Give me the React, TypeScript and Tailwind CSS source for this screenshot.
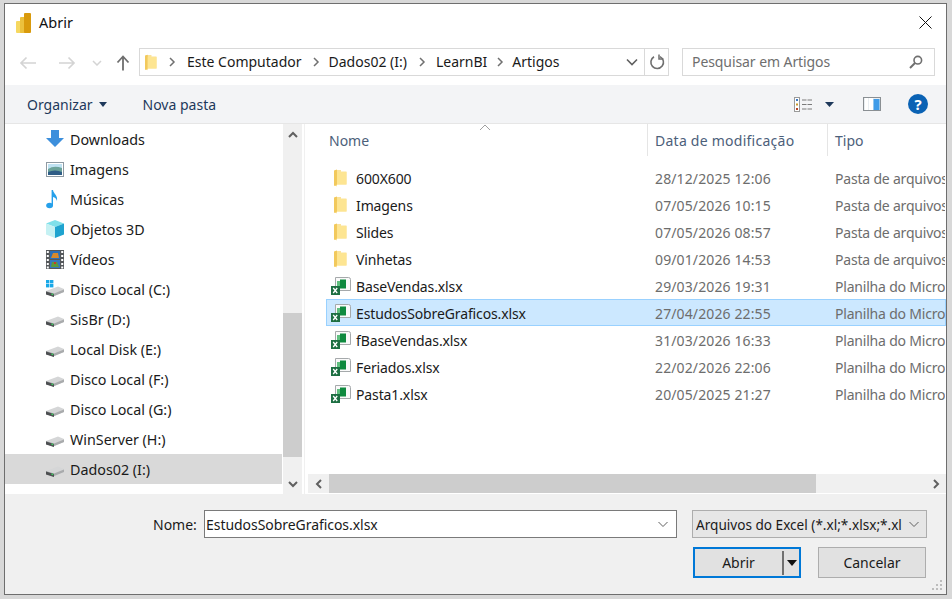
import React from "react";

const font = "font-['Noto_Sans','Open_Sans',sans-serif]";

function Logo() {
  return (
    <svg width="16" height="20" viewBox="0 0 16 20" className="shrink-0">
      <rect x="0" y="8" width="7" height="12" rx="1" fill="#f6d860" />
      <rect x="4" y="4" width="7" height="16" rx="1" fill="#ecc13d" />
      <rect x="8" y="0" width="7" height="20" rx="1" fill="#d99a0c" />
    </svg>
  );
}

function Folder({ w = 13, h = 18 }: { w?: number; h?: number }) {
  return (
    <svg width={w} height={h} viewBox="0 0 13 18" className="shrink-0">
      <path d="M1 1 L7 1 L7 2.5 L12.5 2.5 L12.5 15.5 L3 15.5 L3 17.5 L1 16.5 Z" fill="#fbe39a" />
      <path d="M0 1.5 L3 0.5 L3 15.5 L1 17 L0 16.5 Z" fill="#f2c95c" />
      <path d="M3 3 L12.5 3 L12.5 15.5 L3 15.5 Z" fill="#fde592" />
    </svg>
  );
}

function Excel() {
  return (
    <svg width="20" height="18" viewBox="0 0 20 18" className="shrink-0">
      <path d="M4.5 .5 H17.5 Q19.5 .5 19.5 2.5 V13.5 H4.5 Z" fill="#fafafa" stroke="#a5a9ab" />
      <rect x="6" y="4" width="3" height="7" fill="#5fc07f" />
      <rect x="9" y="2.5" width="6" height="9" fill="#0f8a3f" />
      <rect x="0" y="9" width="9" height="9" fill="#1d6f42" />
      <path d="M2.2 11 L6.2 16 M6.2 11 L2.2 16" stroke="#fff" strokeWidth="1.3" />
    </svg>
  );
}

function Drive({ win }: { win?: boolean }) {
  return (
    <svg width="18" height="18" viewBox="0 0 18 18" className="shrink-0">
      {win && (
        <g fill="#18a8e8">
          <rect x="0" y="0" width="3.4" height="3.4" />
          <rect x="4" y="0" width="3.4" height="3.4" />
          <rect x="0" y="4" width="3.4" height="3.4" />
          <rect x="4" y="4" width="3.4" height="3.4" />
        </g>
      )}
      <path d="M0 11 L12 6.5 L18 9 L18 12 L7 16.5 L0 14 Z" fill="#d5d6d7" />
      <path d="M0 11 L8 13.5 L18 9.5 L18 12 L7 16.5 L0 14 Z" fill="#a9abad" />
      <path d="M0 11.5 L8 14 L8 17 L0 14.5 Z" fill="#4d4f51" />
      <rect x="5.5" y="13.6" width="1.8" height="1.5" fill="#3fcf63" />
    </svg>
  );
}

function SideIcon({ kind }: { kind: string }) {
  if (kind === "down")
    return (
      <svg width="18" height="18" viewBox="0 0 18 18" className="shrink-0">
        <path d="M5 0 H13 V8 H18 L9 17 L0 8 H5 Z" fill="#3d8fdc" />
      </svg>
    );
  if (kind === "img")
    return (
      <svg width="18" height="15" viewBox="0 0 18 15" className="shrink-0">
        <rect x=".5" y=".5" width="17" height="14" fill="#fff" stroke="#8e9aa3" />
        <rect x="2" y="2" width="14" height="5" fill="#bfe2f2" />
        <path d="M2 7 Q8 3 16 6 V13 H2 Z" fill="#6ba39a" />
        <path d="M2 10 Q9 7 16 10 V13 H2 Z" fill="#2f5d86" />
      </svg>
    );
  if (kind === "music")
    return (
      <svg width="12" height="19" viewBox="0 0 12 19" className="shrink-0">
        <ellipse cx="3.6" cy="15.5" rx="3.4" ry="2.8" fill="#26a0ea" />
        <path d="M5.6 0 H7 C7.6 4 12 5 11 11 C10.4 8.5 9 7.5 7 7 V15.5 H5.6 Z" fill="#26a0ea" />
      </svg>
    );
  if (kind === "cube")
    return (
      <svg width="18" height="18" viewBox="0 0 18 18" className="shrink-0">
        <path d="M9 0 L18 3.5 L9 7 L0 3.5 Z" fill="#7fe0ea" />
        <path d="M0 3.5 L9 7 V18 L0 14.5 Z" fill="#c5f1f3" />
        <path d="M18 3.5 L9 7 V18 L18 14.5 Z" fill="#1fa3cf" />
      </svg>
    );
  if (kind === "film")
    return (
      <svg width="18" height="19" viewBox="0 0 18 19" className="shrink-0">
        <rect width="18" height="19" fill="#55585b" />
        <rect x="0.8" y="1" width="2" height="2" fill="#fff" />
        <rect x="0.8" y="5" width="2" height="2" fill="#fff" />
        <rect x="0.8" y="9" width="2" height="2" fill="#fff" />
        <rect x="0.8" y="13" width="2" height="2" fill="#fff" />
        <rect x="0.8" y="16.5" width="2" height="2" fill="#fff" />
        <rect x="15.2" y="1" width="2" height="2" fill="#fff" />
        <rect x="15.2" y="5" width="2" height="2" fill="#fff" />
        <rect x="15.2" y="9" width="2" height="2" fill="#fff" />
        <rect x="15.2" y="13" width="2" height="2" fill="#fff" />
        <rect x="15.2" y="16.5" width="2" height="2" fill="#fff" />
        <rect x="4" y="1" width="10" height="8" fill="#2a6fb8" />
        <rect x="4" y="10" width="10" height="8" fill="#3579bd" />
        <path d="M7 3 L12 3 L13 8 L5 8 Z" fill="#d8892a" />
        <path d="M6 12 L11 12 L13 17 L5 17 Z" fill="#5d9a3a" />
        <rect x="8" y="12" width="2" height="2" fill="#c83a2a" />
      </svg>
    );
  if (kind === "win") return <Drive win />;
  return <Drive />;
}

const nav: [string, string][] = [
  ["down", "Downloads"],
  ["img", "Imagens"],
  ["music", "Músicas"],
  ["cube", "Objetos 3D"],
  ["film", "Vídeos"],
  ["win", "Disco Local (C:)"],
  ["drive", "SisBr (D:)"],
  ["drive", "Local Disk (E:)"],
  ["drive", "Disco Local (F:)"],
  ["drive", "Disco Local (G:)"],
  ["drive", "WinServer (H:)"],
  ["drive", "Dados02 (I:)"],
];

const files: [string, string, string, string][] = [
  ["f", "600X600", "28/12/2025 12:06", "Pasta de arquivos"],
  ["f", "Imagens", "07/05/2026 10:15", "Pasta de arquivos"],
  ["f", "Slides", "07/05/2026 08:57", "Pasta de arquivos"],
  ["f", "Vinhetas", "09/01/2026 14:53", "Pasta de arquivos"],
  ["x", "BaseVendas.xlsx", "29/03/2026 19:31", "Planilha do Microsoft Excel"],
  ["x", "EstudosSobreGraficos.xlsx", "27/04/2026 22:55", "Planilha do Microsoft Excel"],
  ["x", "fBaseVendas.xlsx", "31/03/2026 16:33", "Planilha do Microsoft Excel"],
  ["x", "Feriados.xlsx", "22/02/2026 22:06", "Planilha do Microsoft Excel"],
  ["x", "Pasta1.xlsx", "20/05/2025 21:27", "Planilha do Microsoft Excel"],
];

function Chev({ d, c = "#606060", w = 2, s = 12 }: { d: string; c?: string; w?: number; s?: number }) {
  return (
    <svg width={s} height={s} viewBox="0 0 12 12" className="shrink-0">
      <path d={d} fill="none" stroke={c} strokeWidth={w} />
    </svg>
  );
}

export default function App() {
  return (
    <div className={`${font} w-[952px] h-[599px] bg-[#d8d8d8] pt-[3px] pl-[4px] overflow-hidden text-[14px] leading-[20px] text-[#1a1a1a]`}>
      <div className="w-[943px] h-[592px] border border-[#6e6e6e] bg-white flex flex-col overflow-hidden">
        {/* title */}
        <div className="h-[37px] shrink-0 flex items-center pl-[11px] pr-[14px]">
          <Logo />
          <span className="ml-[7px] pb-[2px] text-[14.5px] text-[#111]">Abrir</span>
          <svg width="13" height="13" viewBox="0 0 13 13" className="ml-auto">
            <path d="M.5 .5 L12.5 12.5 M12.5 .5 L.5 12.5" stroke="#111" strokeWidth="1" />
          </svg>
        </div>
        {/* address */}
        <div className="h-[44px] shrink-0 flex items-start pl-[14px]">
          <div className="w-[120px] h-[28px] mt-[8px] flex items-center">
            <svg width="18" height="14" viewBox="0 0 18 14" className="shrink-0">
              <path d="M17 7 H2 M7.5 1.5 L2 7 L7.5 12.5" fill="none" stroke="#d4d4d4" strokeWidth="1.7" />
            </svg>
            <svg width="18" height="14" viewBox="0 0 18 14" className="shrink-0 ml-[21px]">
              <path d="M1 7 H16 M10.5 1.5 L16 7 L10.5 12.5" fill="none" stroke="#d4d4d4" strokeWidth="1.7" />
            </svg>
            <svg width="10" height="6" viewBox="0 0 10 6" className="shrink-0 ml-[16px]">
              <path d="M1 1 L5 5 L9 1" fill="none" stroke="#d4d4d4" strokeWidth="1.5" />
            </svg>
            <svg width="14" height="16" viewBox="0 0 14 16" className="shrink-0 ml-[14px]">
              <path d="M7 15.5 V2 M1.5 7.5 L7 1.5 L12.5 7.5" fill="none" stroke="#6e6e6e" strokeWidth="1.8" />
            </svg>
          </div>
          <div className="w-[530px] h-[28px] mt-[7px] border border-[#d9d9d9] flex items-center">
            <div className="pl-[5px] w-[26px] flex shrink-0">
              <Folder w={12} h={17} />
            </div>
            <div className="flex items-center text-[14px] flex-1 min-w-0">
              <Chev d="M4 2 L8 6 L4 10" c="#707070" s={12} w={1.5} />
              <span className="ml-[9px]">Este Computador</span>
              <span className="ml-[8px]"><Chev d="M4 2 L8 6 L4 10" c="#707070" w={1.5} /></span>
              <span className="ml-[7px]">Dados02 (I:)</span>
              <span className="ml-[9px]"><Chev d="M4 2 L8 6 L4 10" c="#707070" w={1.5} /></span>
              <span className="ml-[8px]">LearnBI</span>
              <span className="ml-[7px]"><Chev d="M4 2 L8 6 L4 10" c="#707070" w={1.5} /></span>
              <span className="ml-[6px]">Artigos</span>
            </div>
            <div className="w-[24px] h-full flex items-center justify-center">
              <Chev d="M1 3.5 L6 8.5 L11 3.5" c="#606060" w={1.6} />
            </div>
            <div className="w-[24px] h-full border-l border-[#d9d9d9] flex items-center justify-center">
              <svg width="16" height="16" viewBox="0 0 16 16">
                <path d="M5 2.8 A6.3 6.3 0 1 0 11 2.6" fill="none" stroke="#6f6f6f" strokeWidth="1.6" />
                <path d="M10 .5 V5 H14.5" fill="none" stroke="#6f6f6f" strokeWidth="1.5" />
              </svg>
            </div>
          </div>
          <div className="w-[253px] h-[28px] mt-[7px] ml-[13px] border border-[#d9d9d9] flex items-center pl-[9px] pr-[11px] text-[#6e6e6e]">
            <span className="tracking-[-0.08px]">Pesquisar em Artigos</span>
            <svg width="14" height="14" viewBox="0 0 14 14" className="ml-auto">
              <circle cx="8.8" cy="5.2" r="3.8" fill="none" stroke="#6f6f6f" strokeWidth="1.6" />
              <path d="M6 8 L1 13" stroke="#6f6f6f" strokeWidth="2" />
            </svg>
          </div>
        </div>
        {/* toolbar */}
        <div className="h-[39px] shrink-0 bg-[#f3f4f6] border-b border-[#e6e6e6] flex items-center pl-[22px] text-[#1e395b]">
          <span className="pt-[1px]">Organizar</span>
          <svg width="8" height="5" viewBox="0 0 8 5" className="ml-[6px]"><path d="M0 0 H8 L4 5 Z" fill="#1e395b" /></svg>
          <span className="ml-[36px] pt-[1px]">Nova pasta</span>
          <svg width="19" height="15" viewBox="0 0 19 15" className="ml-auto">
            <rect x=".5" y=".5" width="5" height="14" fill="#fff" stroke="#9a9a9a" />
            <rect x="2" y="2" width="2" height="2" fill="#3b78c2" />
            <rect x="2" y="6.5" width="2" height="2" fill="#c99a2e" />
            <rect x="2" y="11" width="2" height="2" fill="#b8432a" />
            <path d="M8 3 H18 M8 7.5 H18 M8 12 H18" stroke="#7a7a7a" strokeWidth="1" strokeDasharray="4.5 1" />
          </svg>
          <svg width="9" height="5" viewBox="0 0 9 5" className="ml-[12px]"><path d="M0 0 H9 L4.5 5 Z" fill="#1e395b" /></svg>
          <svg width="18" height="14" viewBox="0 0 18 14" className="ml-[29px]">
            <rect x=".5" y=".5" width="17" height="13" fill="#e9eef2" stroke="#8a8f93" />
            <rect x="2" y="1" width="3" height="12" fill="#fff" />
            <rect x="6" y="1" width="4" height="12" fill="#fff" />
            <rect x="10.5" y="2" width="6" height="11" fill="#3f9be8" />
          </svg>
          <div className="ml-[27px] mr-[18px] w-[20px] h-[20px] rounded-full bg-[#0a62b4] text-white font-bold text-[15px] leading-[20px] text-center">?</div>
        </div>
        {/* body */}
        <div className="h-[370px] shrink-0 flex">
          <div className="w-[277px] shrink-0">
            {nav.map(([k, t]) => (
              <div key={t} className={`h-[30px] flex items-center ${t.startsWith("Dados02") ? "bg-[#d9d9d9]" : ""}`}>
                <div className="w-[65px] pl-[41px] shrink-0 flex justify-start"><SideIcon kind={k} /></div>
                <span className="whitespace-nowrap text-[14.3px] pt-[1px]">{t}</span>
              </div>
            ))}
          </div>
          <div className="w-[19px] ml-[1px] shrink-0 bg-[#f0f0f0] flex flex-col items-center">
            <div className="h-[21px] shrink-0 flex items-center"><Chev d="M2 8 L6 4 L10 8" /></div>
            <div className="h-[168px] shrink-0" />
            <div className="h-[144px] w-full shrink-0 bg-[#cdcdcd]" />
            <div className="mt-auto h-[21px] w-full flex items-center justify-center"><Chev d="M2 4 L6 8 L10 4" /></div>
          </div>
          <div className="flex-1 min-w-0 ml-[2px] border-l border-[#f0f0f0] flex flex-col overflow-hidden">
            <div className="h-[32px] shrink-0 flex text-[#4c607a] relative">
              <div className="w-[343px] pl-[24px] pt-[2px] shrink-0 border-r border-[#e5e5e5] flex items-center">Nome</div>
              <svg width="10" height="5" viewBox="0 0 10 5" className="absolute left-[175px] top-[1px]"><path d="M0 5 L5 0 L10 5" fill="none" stroke="#a0a0a0" /></svg>
              <div className="w-[180px] pl-[7px] pt-[2px] shrink-0 border-r border-[#e5e5e5] flex items-center whitespace-nowrap tracking-[0.25px]">Data de modificação</div>
              <div className="pl-[7px] pt-[2px] flex items-center">Tipo</div>
            </div>
            <div className="pt-[8px] pl-[21px] flex-1 overflow-hidden">
              {files.map(([k, n, d, t]) => {
                const sel = n.startsWith("Estudos");
                return (
                  <div key={n} className={`h-[27px] flex items-center pl-[4px] whitespace-nowrap overflow-hidden border ${sel ? "bg-[#cce8ff] border-[#99d1ff]" : "border-transparent"}`}>
                    <div className="w-[25px] shrink-0 flex justify-start">
                      {k === "f" ? <span className="pl-[3px]"><Folder /></span> : <Excel />}
                    </div>
                    <span className="w-[299px] shrink-0 pt-[2px] tracking-[-0.12px]">{n}</span>
                    <span className="w-[180px] shrink-0 pt-[2px] text-[#6d6d6d] tracking-[0.12px]">{d}</span>
                    <span className="pt-[2px] text-[#6d6d6d] tracking-[-0.2px]">{t}</span>
                  </div>
                );
              })}
            </div>
            <div className="h-[19px] shrink-0 flex bg-[#f0f0f0] mb-[1px] ml-[3px]">
              <div className="w-[21px] flex items-center justify-center"><Chev d="M8 2 L4 6 L8 10" /></div>
              <div className="w-[487px] bg-[#cdcdcd]" />
              <div className="flex-1 flex items-center justify-end pr-[4px]"><Chev d="M4 2 L8 6 L4 10" /></div>
            </div>
          </div>
        </div>
        {/* footer */}
        <div className="flex-1 bg-[#f0f0f0] relative">
          <div className="absolute inset-0 pt-[16px] pl-[148px]">
            <div className="flex items-center">
              <span className="w-[51px] pt-[1px]">Nome:</span>
              <div className="w-[473px] h-[28px] bg-white border border-[#7a7a7a] flex items-center pl-[1px] pr-[7px]">
                <span className="pt-[1px] tracking-[-0.05px]">EstudosSobreGraficos.xlsx</span>
                <span className="ml-auto"><Chev d="M1.5 4 L6 8.5 L10.5 4" c="#606060" w={1} /></span>
              </div>
              <div className="w-[235px] h-[28px] ml-[15px] bg-[#e6e6e6] border border-[#adadad] flex items-center pl-[3px] pr-[6px] overflow-hidden">
                <span className="whitespace-nowrap overflow-hidden flex-1 text-[13.6px] pt-[1px]">Arquivos do Excel (*.xl;*.xlsx;*.xl</span>
                <span className="ml-[3px]"><Chev d="M1.5 4 L6 8.5 L10.5 4" c="#606060" w={1} /></span>
              </div>
            </div>
            <div className="flex mt-[9px] ml-[540px]">
              <div className="w-[108px] h-[31px] border-2 border-[#0078d7] bg-[#e1e1e1] flex items-center relative">
                <span className="w-[87px] text-center pt-[1px]">Abrir</span>
                <div className="w-[2px] h-[24px] bg-[#707070]" />
                <svg width="10" height="6" viewBox="0 0 10 6" className="ml-[3px]"><path d="M0 0 H10 L5 6 Z" fill="#111" /></svg>
              </div>
              <div className="w-[108px] h-[31px] ml-[17px] border border-[#adadad] bg-[#e1e1e1] flex items-center justify-center pt-[1px]">Cancelar</div>
            </div>
          </div>
          <svg width="12" height="12" viewBox="0 0 12 12" className="absolute right-[3px] bottom-[3px]">
            <g fill="#bdbdbd">
              <rect x="9" y="1" width="2" height="2" />
              <rect x="5" y="5" width="2" height="2" />
              <rect x="9" y="5" width="2" height="2" />
              <rect x="1" y="9" width="2" height="2" />
              <rect x="5" y="9" width="2" height="2" />
              <rect x="9" y="9" width="2" height="2" />
            </g>
          </svg>
        </div>
      </div>
    </div>
  );
}
